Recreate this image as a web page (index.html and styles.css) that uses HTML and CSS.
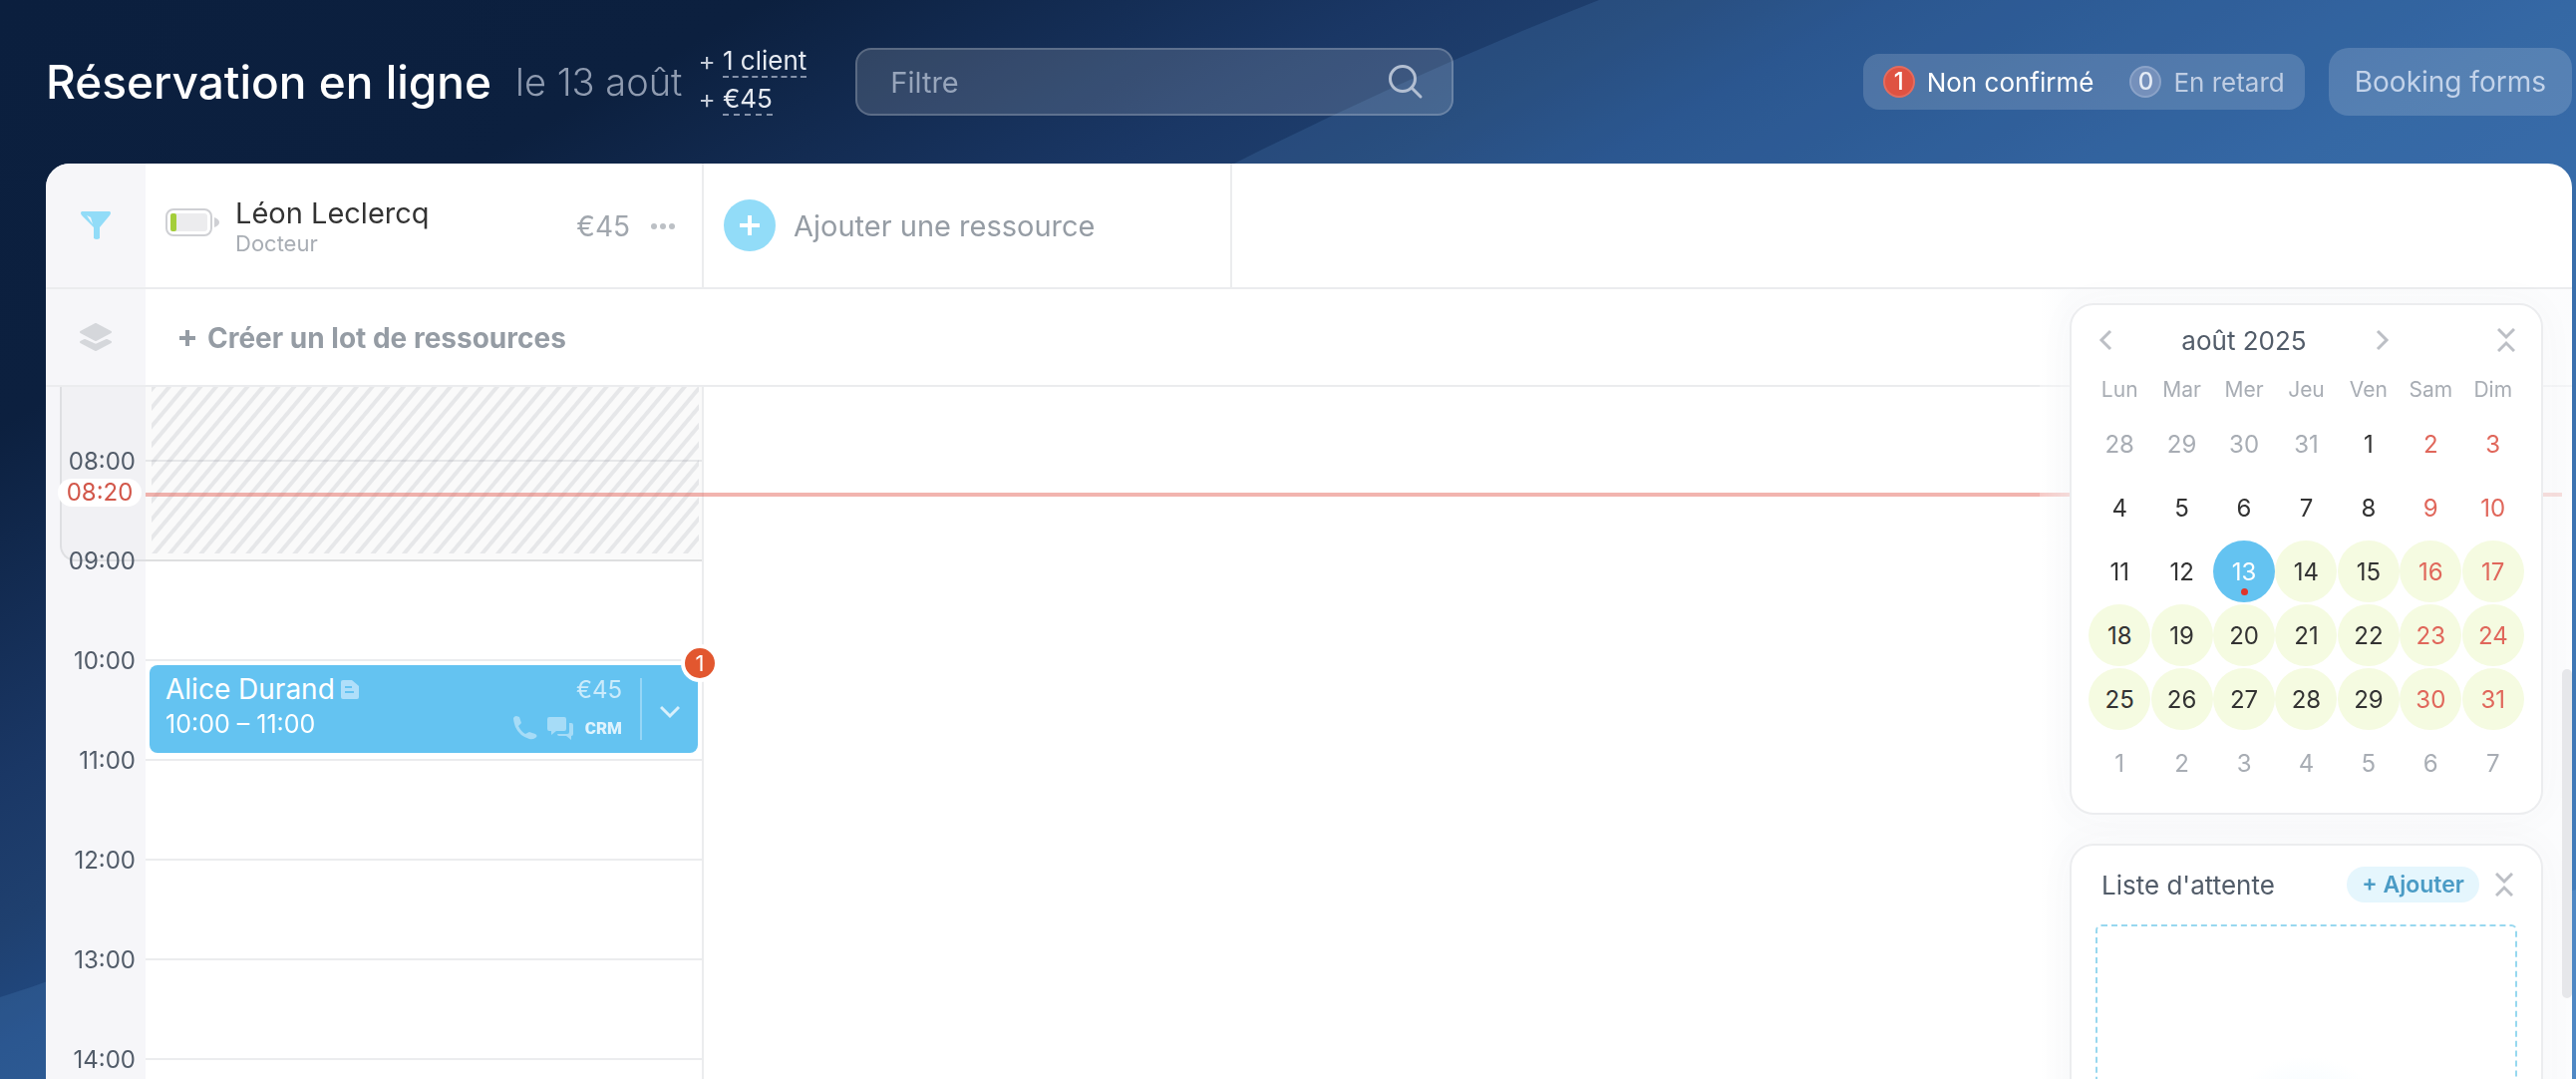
FILE: index.html
```
<!DOCTYPE html>
<html lang="fr">

<head>
    <meta charset="UTF-8" />
    <meta name="viewport" content="width=device-width, initial-scale=1.0" />
    <title>Réservation en ligne</title>
    <link rel="stylesheet" href="styles.css">
</head>

<body>
    <!-- Fond : les vagues claires au-dessus du dégradé -->
    <svg class="fond" viewBox="0 0 2584 1082" preserveAspectRatio="none" aria-hidden="true">
        <path d="M0 1000 C420 870 820 480 1238 164 Q1425 70 1604 0 H2584 V1082 H0 Z" fill="#5d9ad6" fill-opacity=".17" />
        <path d="M2400 950 L2584 892 V1082 H2400 Z" fill="#9ccbf5" fill-opacity=".15" />
    </svg>

    <header class="entete">
        <h1>Réservation en ligne</h1>
        <span class="date">le 13 août</span>
        <div class="totaux">
            <div>+ <a href="#">1 client</a></div>
            <div>+ <a href="#">€45</a></div>
        </div>
        <div class="filtre">
            <input type="text" placeholder="Filtre" aria-label="Filtre" />
            <svg width="36" height="36" viewBox="0 0 36 36" fill="none" stroke="currentColor" stroke-width="3" stroke-linecap="round">
                <circle cx="15" cy="15" r="12.5" />
                <path d="M24 24l9 9" />
            </svg>
        </div>
        <div class="compteurs">
            <button class="compteur actif"><span class="rond">1</span>Non confirmé</button>
            <button class="compteur"><span class="rond">0</span>En retard</button>
        </div>
        <button class="formulaires">Booking forms</button>
    </header>

    <main class="tableau">
        <div class="ligne ressources">
            <button class="rail" aria-label="Filtrer">
                <svg width="32" height="30" viewBox="0 0 32 30">
                    <path d="M2 1h28q2 1 0 4L20 17v11q-3 2-6 0V17L2 5Q0 2 2 1z" fill="#92dcf8" />
                    <path d="M7 5l4 2 2 7z" fill="#f5f7fa" />
                </svg>
            </button>
            <div class="ressource">
                <svg class="batterie" width="54" height="28" viewBox="0 0 54 28">
                    <rect x="1" y="1" width="45" height="26" rx="7" fill="#fff" stroke="#cfd0d4" stroke-width="2" />
                    <rect x="5" y="5" width="37" height="18" rx="3" fill="#ececee" />
                    <rect x="5" y="5" width="6" height="18" rx="2" fill="#a4ce3a" />
                    <path d="M49 9q5 2 5 5t-5 5z" fill="#cfd0d4" />
                </svg>
                <div class="nom">
                    <strong>Léon Leclercq</strong>
                    <small>Docteur</small>
                </div>
                <span class="somme">€45</span>
                <button class="points" aria-label="Plus">
                    <svg width="26" height="8" viewBox="0 0 26 8" fill="#bcc0c5">
                        <circle cx="4" cy="4" r="3" />
                        <circle cx="13" cy="4" r="3" />
                        <circle cx="22" cy="4" r="3" />
                    </svg>
                </button>
            </div>
            <button class="ajoutRessource">
                <span class="plus">
                    <svg width="20" height="20" viewBox="0 0 20 20" stroke="#fff" stroke-width="4">
                        <path d="M10 0v20M0 10h20" />
                    </svg>
                </span>
                Ajouter une ressource
            </button>
        </div>

        <div class="ligne lots">
            <button class="rail" aria-label="Lots">
                <svg width="34" height="30" viewBox="0 0 34 30" fill="#d5d7db" stroke="#d5d7db" stroke-width="2" stroke-linejoin="round">
                    <path d="M17 2l15 8-15 8L2 10z" />
                    <path d="M6 18l11 5 11-5 4 2-15 8-15-8z" />
                </svg>
            </button>
            <button class="creerLot">
                <svg width="16" height="16" viewBox="0 0 16 16" stroke="currentColor" stroke-width="4">
                    <path d="M8 0v16M0 8h16" />
                </svg>
                Créer un lot de ressources
            </button>
        </div>

        <div class="agenda">
            <div class="heures">
                <div class="ferme"></div>
                <div class="heure courte"></div>
                <div class="heure"><span>08:00</span></div>
                <div class="heure"><span>09:00</span></div>
                <div class="heure"><span>10:00</span></div>
                <div class="heure"><span>11:00</span></div>
                <div class="heure"><span>12:00</span></div>
                <div class="heure"><span>13:00</span></div>
                <div class="heure"><span>14:00</span></div>
            </div>
            <div class="colonne">
                <div class="case courte"></div>
                <div class="case"></div>
                <div class="case ouverture"></div>
                <div class="case"></div>
                <div class="case"></div>
                <div class="case"></div>
                <div class="case"></div>
                <div class="case"></div>
                <div class="hachures"></div>

                <article class="reservation">
                    <div class="infos">
                        <div class="client">Alice Durand
                            <svg width="18" height="19" viewBox="0 0 18 19">
                                <path d="M2 0h9l7 6v11q0 2-2 2H2q-2 0-2-2V2Q0 0 2 0z" fill="#b0dffa" />
                                <path d="M4 7h7M4 12h9" stroke="#65c3f1" stroke-width="2" />
                            </svg>
                        </div>
                        <div class="horaire">10:00 – 11:00</div>
                    </div>
                    <div class="actions">
                        <span class="prix">€45</span>
                        <div class="icones">
                            <svg width="24" height="24" viewBox="0 0 24 24" fill="#a6dcf7">
                                <path d="M3 0l3 1 2 6-3 3q3 6 7 8l4-2 6 2q3 2 0 4-3 2-6 1Q6 20 2 11 0 5 0 2 1 0 3 0z" />
                            </svg>
                            <svg width="28" height="24" viewBox="0 0 28 24" fill="#a6dcf7">
                                <path d="M2 1h15q2 0 2 2v10q0 2-2 2H9l-5 4v-4H2q-2 0-2-2V3q0-2 2-2z" />
                                <path d="M22 7h2q2 0 2 2v9q0 2-2 2v4l-5-4h-7q-2 0-2-2h10q2 0 2-2z" />
                            </svg>
                            <b>CRM</b>
                        </div>
                    </div>
                    <button class="derouler" aria-label="Ouvrir le menu">
                        <svg width="20" height="14" viewBox="0 0 20 14" fill="none" stroke="#d8f0fc" stroke-width="3">
                            <path d="M1 2l9 9 9-9" />
                        </svg>
                    </button>
                    <span class="pastille">1</span>
                </article>
            </div>
            <div class="maintenant"><span>08:20</span></div>
        </div>

        <aside class="lateral">
            <section class="carte calendrier">
                <div class="mois">
                    <button aria-label="Mois précédent">
                        <svg width="14" height="22" viewBox="0 0 14 22" fill="none" stroke="currentColor" stroke-width="3">
                            <path d="M12 2l-9 9 9 9" />
                        </svg>
                    </button>
                    <h2>août 2025</h2>
                    <button aria-label="Mois suivant">
                        <svg width="14" height="22" viewBox="0 0 14 22" fill="none" stroke="currentColor" stroke-width="3">
                            <path d="M2 2l9 9-9 9" />
                        </svg>
                    </button>
                    <button class="replier" aria-label="Replier">
                        <svg width="18" height="24" viewBox="0 0 18 24" fill="none" stroke="currentColor" stroke-width="3">
                            <path d="M1 1l8 8 8-8M1 23l8-8 8 8" />
                        </svg>
                    </button>
                </div>
                <table>
                    <thead>
                        <tr><th>Lun</th><th>Mar</th><th>Mer</th><th>Jeu</th><th>Ven</th><th>Sam</th><th>Dim</th></tr>
                    </thead>
                    <tbody id="jours"></tbody>
                </table>
            </section>

            <section class="carte attente">
                <div class="titre">
                    <h2>Liste d'attente</h2>
                    <button class="ajouter">+ Ajouter</button>
                    <button class="replier" aria-label="Replier">
                        <svg width="18" height="24" viewBox="0 0 18 24" fill="none" stroke="currentColor" stroke-width="3">
                            <path d="M1 1l8 8 8-8M1 23l8-8 8 8" />
                        </svg>
                    </button>
                </div>
                <div class="depot"></div>
            </section>
        </aside>
        <div class="ascenseur"></div>
    </main>

    <script>
        //Remplit le calendrier à partir du lundi 28 juillet 2025
        let jours = document.getElementById('jours');
        let jour = new Date(2025, 6, 28);
        for (let s = 0; s < 6; s++) {
            let tr = document.createElement('tr');
            for (let j = 0; j < 7; j++) {
                let td = document.createElement('td');
                let bouton = document.createElement('button');
                bouton.textContent = jour.getDate();
                if (jour.getMonth() != 7) bouton.classList.add('hors');
                else {
                    if (j > 4) bouton.classList.add('weekend');
                    if (jour.getDate() == 13) bouton.classList.add('choisi');
                    if (jour.getDate() > 13) bouton.classList.add('libre');
                }
                td.appendChild(bouton);
                tr.appendChild(td);
                jour.setDate(jour.getDate() + 1);
            }
            jours.appendChild(tr);
        }
    </script>
</body>

</html>
```

FILE: styles.css
```
* {
    box-sizing: border-box;
    margin: 0;
    padding: 0;
}

body {
    display: flex;
    flex-direction: column;
    height: 100vh;
    overflow: hidden;
    padding: 0 4px 0 46px;
    font-family: Inter, "Liberation Sans", sans-serif;
    font-size: 26px;
    color: #525c69;
    background: linear-gradient(151deg, #0b1f3e 0%, #0c203f 17%, #1a3765 31%, #1f406f 37%, #214a83 42%, #2d5e9b 57%, #3c76b6 93%);
}

button {
    border: none;
    background: none;
    font: inherit;
    color: inherit;
    cursor: pointer;
}

svg {
    flex: none;
}

.fond {
    position: absolute;
    inset: 0;
    z-index: -1;
    width: 100%;
    height: 100%;
}

/* Entete */
.entete {
    display: flex;
    align-items: center;
    height: 164px;
    flex: none;
    color: #fff;
    white-space: nowrap;
}

h1 {
    font-size: 46px;
    font-weight: 500;
}

.date {
    margin-left: 24px;
    font-size: 38px;
    font-weight: 300;
    color: #8f9bb0;
}

.totaux {
    margin-left: 16px;
    padding-bottom: 5px;
    line-height: 38px;
    color: #c3cad6;
}

.totaux a {
    display: inline-block;
    line-height: 30px;
    color: #e6eaf1;
    text-decoration: none;
    border-bottom: 2px dashed #8592aa;
}

.filtre {
    display: flex;
    align-items: center;
    width: 600px;
    height: 68px;
    margin-left: 49px;
    padding: 0 28px 0 33px;
    border: 2px solid rgba(255, 255, 255, .2);
    border-radius: 16px;
    background: rgba(255, 255, 255, .14);
    color: #b3bfd2;
}

.filtre input {
    flex: 1;
    border: none;
    outline: none;
    background: none;
    font: inherit;
    font-size: 29px;
    color: #fff;
}

.filtre input::placeholder {
    color: #97a5bb;
    opacity: 1;
}

.compteurs {
    display: flex;
    gap: 36px;
    align-items: center;
    height: 56px;
    margin-left: auto;
    padding: 0 20px;
    border-radius: 16px;
    background: rgba(255, 255, 255, .16);
}

.compteur {
    display: flex;
    align-items: center;
    gap: 12px;
    color: #bfcde3;
}

.compteur.actif {
    color: #fff;
}

.rond {
    width: 32px;
    height: 32px;
    line-height: 28px;
    border-radius: 50%;
    border: 2px solid #8ba3c8;
    background: #7590bb;
    color: #e4ebf5;
    font-size: 24px;
    font-weight: 500;
    text-align: center;
}

.actif .rond {
    border-color: #e36c5f;
    background: #df5242;
    color: #fff;
}

.formulaires {
    height: 68px;
    margin-left: 24px;
    padding: 0 26px;
    border-radius: 20px;
    background: rgba(255, 255, 255, .16);
    color: #c3d3ea;
    font-size: 28px;
}

/* Tableau */
.tableau {
    position: relative;
    display: flex;
    flex-direction: column;
    flex: 1;
    min-height: 0;
    overflow: hidden;
    border-radius: 24px 24px 0 0;
    background: #fff;
}

.ligne {
    display: flex;
    flex: none;
    border-bottom: 2px solid #ebecee;
}

.ressources {
    height: 126px;
}

.lots {
    height: 98px;
}

.rail {
    display: flex;
    align-items: center;
    justify-content: center;
    width: 100px;
    background: #f6f6f9;
}

.ressource {
    display: flex;
    align-items: center;
    width: 560px;
    padding: 2px 26px 0 20px;
    border-right: 2px solid #ebecee;
}

.batterie {
    margin-bottom: 8px;
}

.nom {
    display: flex;
    flex-direction: column;
    flex: 1;
    margin-left: 16px;
}

.nom strong {
    font-size: 29px;
    line-height: 34px;
    font-weight: 400;
    color: #333;
}

.nom small {
    font-size: 22px;
    line-height: 26px;
    color: #a8adb4;
}

.somme {
    margin-right: 20px;
    font-size: 28px;
    color: #a0a6ad;
}

.points {
    display: flex;
}

.ajoutRessource {
    display: flex;
    align-items: center;
    gap: 18px;
    width: 530px;
    padding-left: 20px;
    border-right: 2px solid #ebecee;
    font-size: 29px;
    color: #959ca4;
}

.plus {
    display: flex;
    align-items: center;
    justify-content: center;
    width: 52px;
    height: 52px;
    border-radius: 50%;
    background: #92dcf8;
}

.creerLot {
    display: flex;
    align-items: center;
    gap: 12px;
    padding: 2px 0 0 34px;
    font-size: 28px;
    font-weight: 700;
    color: #959ca4;
}

/* Agenda */
.agenda {
    position: relative;
    display: flex;
    flex: 1;
    min-height: 0;
}

.heures,
.colonne {
    position: relative;
    display: flex;
    flex-direction: column;
    flex: none;
}

.heures {
    width: 100px;
    background: #f6f6f9;
}

.colonne {
    width: 560px;
    border-right: 2px solid #ebecee;
}

.heure,
.case {
    flex: none;
    height: 100px;
}

.heure {
    position: relative;
    padding-right: 10px;
    font-size: 24px;
    text-align: right;
}

.heure span {
    display: block;
    line-height: 32px;
    margin-top: -14px;
}

.case {
    border-top: 2px solid #ebecee;
}

.heure.courte,
.case.courte {
    height: 73px;
    border-top: none;
}

.case.ouverture {
    border-color: #dedfe0;
}

.ferme {
    position: absolute;
    top: 0;
    left: 14px;
    right: 0;
    height: 175px;
    border-left: 2px solid #dedfe2;
    border-bottom: 2px solid #dedfe2;
    border-bottom-left-radius: 16px;
    background: #f1f1f4;
}

.hachures {
    position: absolute;
    top: 0;
    left: 0;
    right: 0;
    height: 173px;
    border: solid #fafafa;
    border-width: 0 3px 6px 6px;
    background: repeating-linear-gradient(130deg, #e6e7e9 0 3px, #fafafa 4px 11px, #e6e7e9 12px);
    mix-blend-mode: multiply;
}

.maintenant {
    position: absolute;
    top: 106px;
    left: 100px;
    right: 10px;
    height: 4px;
    background: rgba(228, 98, 88, .48);
}

.maintenant span {
    position: absolute;
    top: -14px;
    right: 100%;
    margin-right: 4px;
    width: 84px;
    line-height: 28px;
    border-radius: 14px;
    background: #fff;
    color: #d2574a;
    font-size: 24px;
    text-align: center;
}

/* Reservation */
.reservation {
    position: absolute;
    top: 279px;
    left: 4px;
    right: 4px;
    height: 88px;
    display: flex;
    border-radius: 8px;
    background: #64c3f1;
    color: #fff;
}

.infos {
    flex: 1;
    padding: 6px 0 0 16px;
}

.client {
    display: flex;
    align-items: center;
    gap: 6px;
    font-size: 28px;
    line-height: 36px;
}

.horaire {
    font-size: 25px;
    line-height: 34px;
}

.actions {
    display: flex;
    flex-direction: column;
    align-items: flex-end;
    padding: 8px 18px 0 0;
    color: #cbebfb;
    font-size: 24px;
    line-height: 34px;
}

.icones {
    display: flex;
    align-items: center;
    gap: 10px;
    margin-top: 4px;
}

.icones b {
    font: 900 17px/34px Roboto, sans-serif;
    color: #dff3fd;
}

.derouler {
    width: 58px;
    height: 62px;
    margin-top: 13px;
    border-left: 2px solid #96d6f6;
}

.pastille {
    position: absolute;
    top: -21px;
    right: -21px;
    width: 38px;
    height: 38px;
    line-height: 30px;
    border: 4px solid #fff;
    border-radius: 50%;
    background: #e2572f;
    font-size: 22px;
    text-align: center;
}

/* Panneau lateral */
.lateral {
    position: absolute;
    top: 126px;
    right: 0;
    bottom: 0;
    width: 534px;
    padding: 14px 29px 0 30px;
    background: linear-gradient(to right, rgba(255, 255, 255, .3), rgba(249, 250, 252, .6) 30px);
}

.carte {
    border: 2px solid #ecedef;
    border-radius: 24px;
    background: #fff;
    box-shadow: 0 0 40px rgba(82, 92, 105, .03);
}

.carte h2 {
    font-size: 26px;
    font-weight: 400;
    color: #525c69;
}

.carte button {
    color: #bcbfc5;
}

.calendrier {
    height: 513px;
    padding: 15px 17px 0;
}

.mois {
    display: flex;
    align-items: center;
    height: 40px;
    padding: 0 9px 0 10px;
}

.mois h2 {
    flex: none;
    width: 264px;
    text-align: center;
}

.mois button,
.titre .replier {
    display: flex;
}

.mois .replier {
    margin-left: auto;
}

table {
    width: 100%;
    table-layout: fixed;
    border-collapse: collapse;
}

th {
    height: 52px;
    padding-top: 6px;
    font-size: 21px;
    font-weight: 400;
    color: #a8adb4;
}

td {
    height: 64px;
    text-align: center;
    vertical-align: middle;
}

td button {
    position: relative;
    display: block;
    width: 62px;
    height: 62px;
    margin: 0 auto;
    border-radius: 50%;
    font-size: 24px;
}

.carte td button {
    color: #333;
}

.carte td .hors {
    color: #a8adb4;
}

.carte td .weekend {
    color: #e0675b;
}

.libre {
    background: #f5fbe1;
}

.carte td .choisi {
    background: #64c3f1;
    color: #fff;
}

.choisi::after {
    content: "";
    position: absolute;
    bottom: 7px;
    left: 28px;
    width: 7px;
    height: 7px;
    border-radius: 50%;
    background: #e0352b;
}

.attente {
    height: 400px;
    margin-top: 29px;
    padding: 19px 24px 0;
}

.titre {
    display: flex;
    align-items: center;
    height: 40px;
    padding: 0 4px 0 6px;
}

.titre h2 {
    flex: 1;
}

.carte .ajouter {
    height: 36px;
    margin-right: 16px;
    padding: 0 15px;
    border-radius: 18px;
    background: #e5f6fd;
    color: #4a9bc5;
    font-size: 23px;
    font-weight: 600;
}

.depot {
    height: 320px;
    margin-top: 20px;
    border: 2px dashed #98d8ef;
    border-radius: 6px;
    background: radial-gradient(circle at 50% 220px, #eaf7fe, #fff 90px);
}

.ascenseur {
    position: absolute;
    top: 507px;
    right: 0;
    width: 10px;
    height: 330px;
    border-radius: 5px;
    background: #e6e7ea;
}
```
